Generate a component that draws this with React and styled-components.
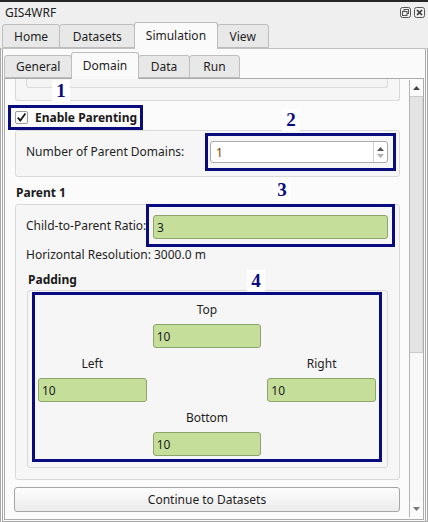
import React from "react";
import styled, { createGlobalStyle } from "styled-components";

const GlobalStyle = createGlobalStyle`
  html, body { margin: 0; padding: 0; }
  body {
    font-family: "Noto Sans", "Open Sans", sans-serif;
    font-size: 12px;
    color: #1e1e1e;
    background: #efefef;
  }
  * { box-sizing: border-box; }
`;

const NAVY = "#0b0b80";

const Window = styled.div`
  width: 428px;
  height: 522px;
  display: flex;
  flex-direction: column;
  background: #efefef;
  border-top: 2px solid #262626;
  overflow: hidden;
`;

const TitleBar = styled.div`
  height: 20px;
  flex: 0 0 20px;
  display: flex;
  align-items: center;
  justify-content: space-between;
  padding: 1px 3px 0 5px;
`;

const Title = styled.span`
  font-size: 12px;
  color: #222;
`;

const TitleIcons = styled.div`
  display: flex;
  gap: 3px;
  align-items: center;
`;

const TabBar = styled.div`
  flex: 0 0 ${(p) => p.$height}px;
  height: ${(p) => p.$height}px;
  display: flex;
  align-items: flex-end;
  padding-left: ${(p) => p.$indent}px;
  position: relative;
  z-index: 2;
`;

const Tab = styled.div`
  height: ${(p) => (p.$active ? p.$tall : p.$short)}px;
  margin-bottom: ${(p) => (p.$active ? -1 : 0)}px;
  margin-right: -1px;
  padding: 0 ${(p) => p.$pad}px ${(p) => (p.$active ? 2 : 0)}px;
  display: flex;
  align-items: center;
  justify-content: center;
  white-space: nowrap;
  background: ${(p) => (p.$active ? "#fafafa" : "#e8e8e8")};
  border: 1px solid #bdbdbd;
  border-bottom: ${(p) => (p.$active ? "none" : "1px solid #bdbdbd")};
  border-radius: 3px 3px 0 0;
  position: relative;
  z-index: ${(p) => (p.$active ? 3 : 1)};
  color: #1e1e1e;
`;

const MainPane = styled.div`
  flex: 1;
  min-height: 0;
  display: flex;
  flex-direction: column;
  background: #fafafa;
  border-top: 1px solid #c2c2c2;
  border-left: 3px double #a8a8a8;
  border-right: 3px double #a8a8a8;
  border-bottom: 1px solid #a8a8a8;
  padding: 3px 1px 1px 1px;
`;

const SubPane = styled.div`
  flex: 1;
  min-height: 0;
  display: flex;
  border: 1px solid #acacac;
  background: #fbfbfb;
`;

const ScrollArea = styled.div`
  flex: 1;
  min-width: 0;
  overflow: hidden;
  display: flex;
  flex-direction: column;
  background: #fbfbfb;
`;

const Scrollbar = styled.div`
  flex: 0 0 14px;
  width: 14px;
  margin: 1px 0 2px;
  display: flex;
  flex-direction: column;
  border-left: 1px solid #b4b4b4;
  background: #f8f8f8;
`;

const ScrollButton = styled.div`
  height: 16px;
  flex: 0 0 16px;
  display: flex;
  align-items: center;
  justify-content: center;
  background: #fbfbfb;
  margin-top: ${(p) => (p.$bottom ? "auto" : "0")};
`;

const Thumb = styled.div`
  height: 257px;
  flex: 0 0 257px;
  background: #e4e4e4;
  border-top: 1px solid #c9c9c9;
  border-bottom: 1px solid #c9c9c9;
  border-right: 1px solid #d4d4d4;
`;

const StubOuter = styled.div`
  flex: 0 0 22px;
  height: 22px;
  margin: 0 9px 0 10px;
  border: 1px solid #d8d8d8;
  border-top: none;
  border-radius: 0 0 3px 3px;
  background: #f6f6f6;
  padding: 0 11px 0 10px;
`;

const StubInner = styled.div`
  height: 9px;
  border: 1px solid #dadada;
  border-top: none;
  border-radius: 0 0 3px 3px;
  background: #f4f4f4;
`;

const Annotation = styled.div`
  position: relative;
  border: 3px solid ${NAVY};
  padding: ${(p) => p.$pad};
  flex: 0 0 auto;
  align-self: ${(p) => p.$self || "auto"};
  margin: ${(p) => p.$margin || "0"};
  z-index: 1;
`;

const Marker = styled.span`
  position: absolute;
  top: ${(p) => p.$top}px;
  left: ${(p) => p.$left}px;
  width: 18px;
  height: 22px;
  line-height: 22px;
  text-align: center;
  background: #ffffff;
  color: ${NAVY};
  font-family: "Liberation Serif", "DejaVu Serif", serif;
  font-weight: bold;
  font-size: 19px;
`;

const CheckRow = styled.label`
  display: flex;
  align-items: center;
  gap: 7px;
  height: 19px;
  font-weight: bold;
  color: #1a1a1a;
`;

const CheckBox = styled.span`
  width: 13px;
  height: 13px;
  border: 1px solid #9d9d9d;
  border-radius: 2px;
  background: #ffffff;
  display: flex;
  align-items: center;
  justify-content: center;
`;

const Group = styled.div`
  margin: ${(p) => p.$margin};
  border: 1px solid #d9d9d9;
  border-radius: 3px;
  background: #f6f6f6;
  padding: ${(p) => p.$pad};
  display: flex;
  flex-direction: ${(p) => p.$dir || "column"};
  align-items: ${(p) => p.$align || "stretch"};
  justify-content: ${(p) => p.$justify || "flex-start"};
`;

const FormRow = styled.div`
  margin: ${(p) => p.$margin};
  display: flex;
  align-items: center;
  justify-content: space-between;
`;

const FieldLabel = styled.span`
  white-space: nowrap;
  color: #1e1e1e;
  line-height: 16px;
  width: ${(p) => (p.$width ? `${p.$width}px` : "auto")};
  margin: ${(p) => p.$margin || "0"};
`;

const SectionTitle = styled.div`
  font-weight: bold;
  line-height: 16px;
  color: #1a1a1a;
  margin: ${(p) => p.$margin};
`;

const SpinBox = styled.div`
  width: 178px;
  height: 22px;
  display: flex;
  border: 1px solid #a9a9a9;
  border-radius: 3px;
  background: #ffffff;
`;

const SpinValue = styled.span`
  flex: 1;
  display: flex;
  align-items: center;
  padding-left: 5px;
  color: #7a3e06;
`;

const SpinArrows = styled.div`
  width: 14px;
  border-left: 1px solid #cfcfcf;
  display: flex;
  flex-direction: column;
  align-items: center;
  justify-content: center;
  gap: 3px;
`;

const GreenInput = styled.div`
  width: ${(p) => (p.$width ? `${p.$width}px` : "100%")};
  height: 24px;
  display: flex;
  align-items: center;
  padding-left: 3px;
  background: #c5df9b;
  border: 1px solid #8ea46c;
  border-radius: 3px;
  color: #1a1a1a;
`;

const PaddingGrid = styled.div`
  display: grid;
  grid-template-columns: repeat(3, 1fr);
  grid-template-rows: repeat(3, 48px);
  column-gap: 6px;
  row-gap: 6px;
  padding: 5px 3px 3px 3px;
`;

const PadCell = styled.div`
  grid-column: ${(p) => p.$col};
  grid-row: ${(p) => p.$row};
  display: flex;
  flex-direction: column;
  align-items: center;
  gap: 4px;
`;

const PadLabel = styled.span`
  height: 20px;
  line-height: 20px;
  color: #1e1e1e;
`;

const Button = styled.div`
  flex: 0 0 25px;
  height: 25px;
  margin: 7px 9px 0 9px;
  display: flex;
  align-items: center;
  justify-content: center;
  border: 1px solid #a5a5a5;
  border-radius: 3px;
  background: linear-gradient(#fdfdfd, #ebebeb);
  color: #1e1e1e;
`;

const Tri = ({ dir = "up", color = "#444" }) => (
  <svg width="7" height="4" viewBox="0 0 7 4">
    {dir === "up" ? (
      <path d="M0 4 L3.5 0 L7 4 Z" fill={color} />
    ) : (
      <path d="M0 0 L3.5 4 L7 0 Z" fill={color} />
    )}
  </svg>
);

const RestoreIcon = () => (
  <svg width="11" height="11" viewBox="0 0 11 11">
    <rect x="0.5" y="0.5" width="10" height="10" rx="2" fill="none" stroke="#555" />
    <rect x="4" y="2.5" width="4.5" height="4" fill="none" stroke="#555" />
    <rect x="2.5" y="4.5" width="4.5" height="4" fill="#efefef" stroke="#555" />
  </svg>
);

const CloseIcon = () => (
  <svg width="11" height="11" viewBox="0 0 11 11">
    <rect x="0.5" y="0.5" width="10" height="10" rx="2" fill="none" stroke="#555" />
    <path d="M3 3 L8 8 M8 3 L3 8" stroke="#333" strokeWidth="1.6" />
  </svg>
);

const mainTabs = [
  { label: "Home", pad: 11 },
  { label: "Datasets", pad: 12.5 },
  { label: "Simulation", pad: 10.5 },
  { label: "View", pad: 12 },
].map((t) => ({ ...t, active: t.label === "Simulation" }));

const subTabs = [
  { label: "General", pad: 11 },
  { label: "Domain", pad: 10.5 },
  { label: "Data", pad: 12 },
  { label: "Run", pad: 13 },
].map((t) => ({ ...t, active: t.label === "Domain" }));

export default function App() {
  return (
    <>
      <GlobalStyle />
      <Window>
        <TitleBar>
          <Title>GIS4WRF</Title>
          <TitleIcons>
            <RestoreIcon />
            <CloseIcon />
          </TitleIcons>
        </TitleBar>
        <TabBar $height={26} $indent={2}>
          {mainTabs.map((t) => (
            <Tab key={t.label} $active={t.active} $pad={t.pad} $tall={27} $short={24}>
              {t.label}
            </Tab>
          ))}
        </TabBar>
        <MainPane>
          <TabBar $height={26} $indent={0}>
            {subTabs.map((t) => (
              <Tab key={t.label} $active={t.active} $pad={t.pad} $tall={27} $short={23}>
                {t.label}
              </Tab>
            ))}
          </TabBar>
          <SubPane>
            <ScrollArea>
              <StubOuter>
                <StubInner />
              </StubOuter>

              <Annotation $pad="0 3px 0 4px" $self="flex-start" $margin="4px 0 0 3px">
                <Marker $top={-28} $left={41}>1</Marker>
                <CheckRow>
                  <CheckBox>
                    <svg width="11" height="11" viewBox="0 0 11 11">
                      <path d="M1.8 5.6 L4.3 8.6 L9.4 1.6" fill="none" stroke="#111" strokeWidth="1.7" />
                    </svg>
                  </CheckBox>
                  Enable Parenting
                </CheckRow>
              </Annotation>

              <Group
                $margin="0 9px 0 10px"
                $pad="2px 3px 5px 10px"
                $dir="row"
                $align="center"
                $justify="space-between"
              >
                <FieldLabel>Number of Parent Domains:</FieldLabel>
                <Annotation $pad="5px 5px 5px 2px">
                  <Marker $top={-27} $left={74}>2</Marker>
                  <SpinBox>
                    <SpinValue>1</SpinValue>
                    <SpinArrows>
                      <Tri dir="up" color="#555" />
                      <Tri dir="down" color="#b0b0b0" />
                    </SpinArrows>
                  </SpinBox>
                </Annotation>
              </Group>

              <SectionTitle $margin="8px 0 3px 11px">Parent 1</SectionTitle>

              <Group $margin="0 9px 0 10px" $pad="0 0 11px 0">
                <FormRow $margin="-1px 4px 0 10px">
                  <FieldLabel $width={120}>Child-to-Parent Ratio:</FieldLabel>
                  <Annotation $pad="8px 4px 5px 4px">
                    <Marker $top={-28} $left={124}>3</Marker>
                    <GreenInput $width={235}>3</GreenInput>
                  </Annotation>
                </FormRow>
                <FieldLabel $margin="0 0 0 10px">Horizontal Resolution: 3000.0 m</FieldLabel>
                <SectionTitle $margin="9px 0 2px 12px">Padding</SectionTitle>
                <Group $margin="0 11px 0 11px" $pad="0 5px 5px 4px">
                  <Annotation $pad="0" $margin="1px 0 0 0">
                    <Marker $top={-25} $left={212}>4</Marker>
                    <PaddingGrid>
                      <PadCell $col={2} $row={1}>
                        <PadLabel>Top</PadLabel>
                        <GreenInput>10</GreenInput>
                      </PadCell>
                      <PadCell $col={1} $row={2}>
                        <PadLabel>Left</PadLabel>
                        <GreenInput>10</GreenInput>
                      </PadCell>
                      <PadCell $col={3} $row={2}>
                        <PadLabel>Right</PadLabel>
                        <GreenInput>10</GreenInput>
                      </PadCell>
                      <PadCell $col={2} $row={3}>
                        <PadLabel>Bottom</PadLabel>
                        <GreenInput>10</GreenInput>
                      </PadCell>
                    </PaddingGrid>
                  </Annotation>
                </Group>
              </Group>

              <Button>Continue to Datasets</Button>
            </ScrollArea>
            <Scrollbar>
              <ScrollButton>
                <Tri dir="up" />
              </ScrollButton>
              <Thumb />
              <ScrollButton $bottom>
                <Tri dir="down" color="#777" />
              </ScrollButton>
            </Scrollbar>
          </SubPane>
        </MainPane>
      </Window>
    </>
  );
}
